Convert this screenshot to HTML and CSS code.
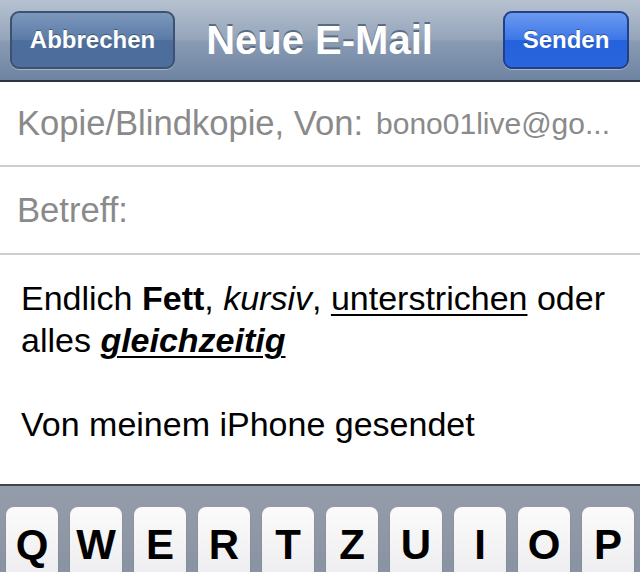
FILE: index.html
```html
<!DOCTYPE html>
<html>
<head>
	<title>Neue E-Mail</title>
	<meta charset="UTF-8">
	<meta name="viewport" content="width=device-width, initial-scale=1.0">
	<link rel="stylesheet" href="styles.css">
</head>
<body>
	<div class="screen">
		<header class="navbar">
			<button class="nav-btn cancel">Abbrechen</button>
			<h1 class="title">Neue E-Mail</h1>
			<button class="nav-btn send">Senden</button>
		</header>

		<div class="field field-from">
			<span class="label">Kopie/Blindkopie, Von:</span>
			<span class="value">bono01live@go...</span>
		</div>
		<div class="field field-subject">
			<span class="label">Betreff:</span>
		</div>

		<div class="message">
			<p>Endlich <b>Fett</b>, <i>kursiv</i>, <u>unterstrichen</u> oder alles <u><b><i>gleichzeitig</i></b></u></p>
			<p class="blank">&nbsp;</p>
			<p>Von meinem iPhone gesendet</p>
		</div>

		<div class="keyboard">
			<div class="key-row">
				<div class="key">Q</div>
				<div class="key">W</div>
				<div class="key">E</div>
				<div class="key">R</div>
				<div class="key">T</div>
				<div class="key">Z</div>
				<div class="key">U</div>
				<div class="key">I</div>
				<div class="key">O</div>
				<div class="key">P</div>
			</div>
		</div>
	</div>
</body>
</html>
```

FILE: styles.css
```css
html, body {
	margin: 0;
	padding: 0;
	height: 100%;
	background-color: #fff;
	font-family: "Liberation Sans", Arial, sans-serif;
}

.screen {
	display: flex;
	flex-direction: column;
	height: 572px;
	overflow: hidden;
}

.navbar {
	display: grid;
	grid-template-columns: 1fr auto 1fr;
	align-items: center;
	height: 82px;
	padding: 0 11px 0 10px;
	box-sizing: border-box;
	flex-shrink: 0;
	background: linear-gradient(#b7c2d0 0%, #94a4ba 50%, #8a9bb3 51%, #6e84a2 100%);
	border-bottom: 2px solid #2e3540;
}

.title {
	margin: 0;
	font-size: 40px;
	font-weight: bold;
	color: #fff;
	text-shadow: 0 -2px 0 #5a6b82;
	white-space: nowrap;
}

.nav-btn {
	height: 58px;
	border-radius: 9px;
	font-family: "Liberation Sans", Arial, sans-serif;
	font-size: 24px;
	font-weight: bold;
	color: #fff;
	text-shadow: 0 -1px 0 rgba(0, 0, 0, 0.35);
	padding: 0;
	box-shadow: 0 1px 0 rgba(255, 255, 255, 0.35);
}

.cancel {
	justify-self: start;
	width: 165px;
	background: linear-gradient(#7d98bd 0%, #5a7aa6 50%, #4d6d9c 51%, #4c6d9d 100%);
	border: 2px solid #3b5272;
}

.send {
	justify-self: end;
	width: 126px;
	background: linear-gradient(#6b9af0 0%, #3c76e6 50%, #2462db 51%, #2a65dd 100%);
	border: 2px solid #22408a;
}

.field {
	display: flex;
	align-items: center;
	padding-left: 17px;
	border-bottom: 2px solid #cdcdcd;
	color: #8a8a8a;
	white-space: nowrap;
	flex-shrink: 0;
}

.field-from {
	height: 83px;
}

.field-subject {
	height: 86px;
}

.label {
	font-size: 34.6px;
}

.value {
	font-size: 30px;
	margin-left: 13px;
}

.message {
	flex: 1;
	padding: 22px 20px 0 21px;
	font-size: 34px;
	line-height: 42px;
	color: #000;
}

.message p {
	margin: 0;
}

.message u {
	text-decoration-thickness: 2px;
	text-underline-offset: 4px;
}

.keyboard {
	flex-shrink: 0;
	height: 88px;
	box-sizing: border-box;
	padding: 21px 0 0 6px;
	border-top: 2px solid #40454d;
	background: linear-gradient(#959dab 0%, #8a93a1 100%);
}

.key-row {
	display: flex;
	gap: 12px;
}

.key {
	width: 52px;
	height: 90px;
	border-radius: 8px;
	background: linear-gradient(#fbfbfb 0%, #e9e9ec 100%);
	box-shadow: 0 1px 1px rgba(0, 0, 0, 0.4);
	text-align: center;
	font-size: 42px;
	font-weight: bold;
	line-height: 60px;
	padding-top: 8px;
	box-sizing: border-box;
	color: #000;
}
```
